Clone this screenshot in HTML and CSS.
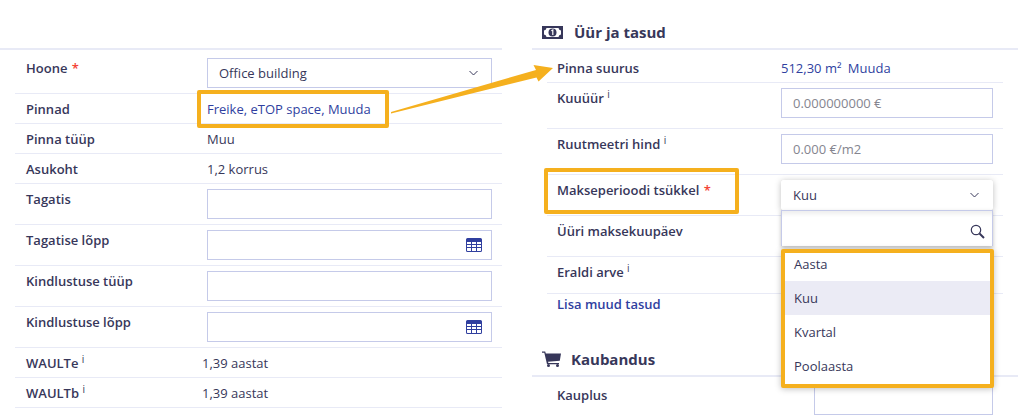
FILE: index.html
```html
<!DOCTYPE html>
<html lang="en">
<head>
    <meta charset="UTF-8">
    <meta name="viewport" content="width=device-width, initial-scale=1.0">
    <title>Üür ja tasud</title>
    <link rel="stylesheet" href="styles.css">
</head>
<body>
    <div class="page">
        <div class="column column-left">
            <div class="section-head"></div>
            <div class="row row-first">
                <div class="label">Hoone <span class="req">*</span></div>
                <div class="control select">
                    <span>Office building</span>
                    <svg class="chevron" width="9" height="6" viewBox="0 0 9 6"><path d="M.5 1l4 4 4-4" fill="none" stroke="#3a3a5c" stroke-width="1"/></svg>
                </div>
            </div>
            <div class="row row-text">
                <div class="label">Pinnad</div>
                <div class="value"><a class="link">Freike, eTOP space, Muuda</a></div>
            </div>
            <div class="row row-text">
                <div class="label">Pinna tüüp</div>
                <div class="value">Muu</div>
            </div>
            <div class="row row-text">
                <div class="label">Asukoht</div>
                <div class="value">1,2 korrus</div>
            </div>
            <div class="row">
                <div class="label">Tagatis</div>
                <input class="control" type="text">
            </div>
            <div class="row">
                <div class="label">Tagatise lõpp</div>
                <div class="control date">
                    <svg width="16" height="14" viewBox="0 0 16 14"><path d="M0 1.500A1.500 1.500 0 0 1 1.500 0h13A1.500 1.500 0 0 1 16 1.500v11a1.500 1.500 0 0 1-1.500 1.500h-13A1.500 1.500 0 0 1 0 12.500zM1 4v2h4V4zm5 0v2h4V4zm5 0v2h4V4zM1 7v2h4V7zm5 0v2h4V7zm5 0v2h4V7zM1 10v2.500c0 .3.200.5.500.5H5v-3zm5 0v3h4v-3zm5 0v3h3.500c.3 0 .5-.2.500-.5V10z" fill="#303f9f" fill-rule="evenodd"/></svg>
                </div>
            </div>
            <div class="row">
                <div class="label">Kindlustuse tüüp</div>
                <input class="control" type="text">
            </div>
            <div class="row">
                <div class="label">Kindlustuse lõpp</div>
                <div class="control date">
                    <svg width="16" height="14" viewBox="0 0 16 14"><path d="M0 1.500A1.500 1.500 0 0 1 1.500 0h13A1.500 1.500 0 0 1 16 1.500v11a1.500 1.500 0 0 1-1.500 1.500h-13A1.500 1.500 0 0 1 0 12.500zM1 4v2h4V4zm5 0v2h4V4zm5 0v2h4V4zM1 7v2h4V7zm5 0v2h4V7zm5 0v2h4V7zM1 10v2.500c0 .3.200.5.500.5H5v-3zm5 0v3h4v-3zm5 0v3h3.500c.3 0 .5-.2.500-.5V10z" fill="#303f9f" fill-rule="evenodd"/></svg>
                </div>
            </div>
            <div class="row row-text">
                <div class="label">WAULTe <sup class="info">i</sup></div>
                <div class="value value-shift">1,39 aastat</div>
            </div>
            <div class="row row-text">
                <div class="label">WAULTb <sup class="info">i</sup></div>
                <div class="value value-shift">1,39 aastat</div>
            </div>
        </div>

        <div class="column column-right">
            <div class="section-head">
                <svg class="head-icon" width="21" height="13" viewBox="0 0 21 13">
                    <path d="M0 0h21v13H0z" fill="#37375a"/>
                    <path d="M4.500 2h12A3 3 0 0 0 19 4.500v4A3 3 0 0 0 16.500 11h-12A3 3 0 0 0 2 8.500v-4A3 3 0 0 0 4.500 2z" fill="#fff"/>
                    <circle cx="10.500" cy="6.500" r="4" fill="#37375a"/>
                    <path d="M9.300 4.700l1.500-.7v5" fill="none" stroke="#fff" stroke-width="1.200"/>
                </svg>
                <span>Üür ja tasud</span>
            </div>
            <div class="row row-first row-text row-narrow">
                <div class="label">Pinna suurus</div>
                <div class="value"><a class="link">512,30 m²</a> <a class="link link-after">Muuda</a></div>
            </div>
            <div class="row row-narrow row-tall">
                <div class="label">Kuuüür <sup class="info">i</sup></div>
                <input class="control" type="text" placeholder="0.000000000 €">
            </div>
            <div class="row row-narrow row-tall">
                <div class="label">Ruutmeetri hind <sup class="info">i</sup></div>
                <input class="control" type="text" placeholder="0.000 €/m2">
            </div>
            <div class="row row-narrow">
                <div class="label">Makseperioodi tsükkel <span class="req">*</span></div>
                <div class="control select select-open">
                    <span>Kuu</span>
                    <svg class="chevron" width="9" height="6" viewBox="0 0 9 6"><path d="M.5 1l4 4 4-4" fill="none" stroke="#3a3a5c" stroke-width="1"/></svg>
                    <div class="dropdown">
                        <div class="dropdown-search">
                            <svg width="15" height="15" viewBox="0 0 15 15"><circle cx="6" cy="6" r="4.700" fill="none" stroke="#37375a" stroke-width="1.200"/><path d="M9.500 9.500l4.500 4.500" stroke="#37375a" stroke-width="2"/></svg>
                        </div>
                        <ul class="dropdown-list">
                            <li class="option option-top">Aasta</li>
                            <li class="option option-active">Kuu</li>
                            <li class="option">Kvartal</li>
                            <li class="option">Poolaasta</li>
                        </ul>
                    </div>
                </div>
            </div>
            <div class="row row-narrow row-payday">
                <div class="label">Üüri maksekuupäev</div>
            </div>
            <div class="row row-narrow row-invoice">
                <div class="label">Eraldi arve <sup class="info">i</sup></div>
            </div>
            <a class="link link-strong">Lisa muud tasud</a>

            <div class="section-head section-second">
                <svg class="head-icon head-icon-cart" width="19" height="16" viewBox="0 0 19 16">
                    <path d="M0 .5h3.200l.6 2H19l-1.200 7.200-11.800 1 .4 1.300H17v1.300H5L2.300 1.800H0z" fill="#37375a"/>
                    <circle cx="6.500" cy="14.500" r="1.500" fill="#37375a"/>
                    <circle cx="15.500" cy="14.500" r="1.500" fill="#37375a"/>
                </svg>
                <span>Kaubandus</span>
            </div>
            <div class="row row-first row-narrow row-plain">
                <div class="label">Kauplus</div>
                <input class="control control-short" type="text">
            </div>
        </div>

        <!-- juhise märgistus pildi peal -->
        <div class="mark mark-links"></div>
        <div class="mark mark-cycle"></div>
        <svg class="arrow" width="1036" height="420" viewBox="0 0 1036 420">
            <path d="M391 112L536 70 533.500 65 553 68 538.500 81.500 536.500 77.500 391 113.500z" fill="#f5b01e"/>
        </svg>
    </div>
</body>
</html>
```

FILE: styles.css
```css
* {
    box-sizing: border-box;
}

body {
    margin: 0;
    background: #fff;
    color: #37375a;
    font-family: "Open Sans", "Noto Sans", sans-serif;
    font-size: 13px;
    line-height: 20px;
    overflow: hidden;
}

.page {
    position: relative;
    display: flex;
    gap: 30px;
    width: 1036px;
    height: 420px;
    overflow: hidden;
}

.column-left {
    width: 502px;
}

.column-right {
    width: 486px;
}

.section-head {
    display: flex;
    align-items: center;
    height: 50px;
    padding: 24px 0 8px 10px;
    border-bottom: 2px solid #e8eaf6;
    font-size: 15px;
    font-weight: 700;
}

.section-second {
    margin-top: 13px;
}

.head-icon {
    flex: none;
    margin-right: 11px;
}

.head-icon-cart {
    margin-right: 10px;
}

.row {
    display: flex;
    margin-left: 15px;
    padding: 5px 10px 5px 11px;
    border-bottom: 1px solid #e8eaf6;
}

.row-first {
    padding-top: 8px;
}

.row-text {
    padding-bottom: 4px;
}

.row-narrow {
    margin-left: 15px;
    margin-right: 15px;
    padding-left: 10px;
}

.row-tall {
    padding-bottom: 10px;
}

.row-payday {
    height: 41px;
}

.row-invoice {
    height: 37px;
}

.row-plain {
    border-bottom: none;
}

.label {
    flex: none;
    width: 181px;
    font-weight: 600;
}

.row-narrow .label {
    width: 224px;
}

.req {
    margin-left: 1px;
    color: #f44336;
}

.info {
    font-size: 10px;
    font-weight: 400;
    line-height: 0;
}

.value {
    flex: 1;
}

.value-shift {
    margin-left: -5px;
}

.link {
    color: #303f9f;
}

.link-after {
    margin-left: 3px;
}

.link-strong {
    display: block;
    margin-left: 25px;
    font-weight: 600;
}

.control {
    position: relative;
    display: flex;
    align-items: center;
    flex: 1;
    height: 30px;
    padding: 0 11px;
    border: 1px solid #c5cae9;
    border-radius: 0;
    background: #fff;
    color: #37375a;
    font: inherit;
    outline: none;
}

.control::placeholder {
    color: #85858f;
    opacity: 1;
}

.control-short {
    flex: none;
    width: 179px;
    margin-left: 33px;
}

.select {
    justify-content: space-between;
}

.chevron {
    margin-right: 2px;
}

.date {
    justify-content: flex-end;
    padding-right: 9px;
}

.select-open {
    border-color: #fff;
    border-radius: 2px;
    box-shadow: 0 1px 6px rgba(0, 0, 0, 0.25);
}

.dropdown {
    position: absolute;
    top: 29px;
    left: -1px;
    right: -1px;
    z-index: 5;
}

.dropdown-search {
    display: flex;
    align-items: center;
    justify-content: flex-end;
    height: 36px;
    padding: 5px 7px 0 0;
    border: 1px solid #c5cae9;
    border-bottom: none;
    background: #fff;
    box-shadow: 0 2px 4px rgba(0, 0, 0, 0.25), inset 0 6px 4px -3px rgba(0, 0, 0, 0.07);
}

.dropdown-list {
    width: 213px;
    height: 139px;
    margin: 3px 0 0;
    padding: 0;
    overflow: hidden;
    list-style: none;
    border: 4px solid #f5b01e;
    border-radius: 2px;
    background: #fff;
    box-shadow: 0 1px 6px rgba(0, 0, 0, 0.25);
}

.option {
    height: 34px;
    padding: 0 9px;
    line-height: 34px;
}

.option-top {
    margin-top: -6px;
}

.option-active {
    background: #ebebf5;
}

.mark {
    position: absolute;
    border: 4px solid #f5b01e;
    border-radius: 2px;
}

.mark-links {
    left: 197px;
    top: 90px;
    width: 192px;
    height: 38px;
}

.mark-cycle {
    left: 544px;
    top: 168px;
    width: 195px;
    height: 46px;
}

.arrow {
    position: absolute;
    left: 0;
    top: 0;
    pointer-events: none;
}
```
